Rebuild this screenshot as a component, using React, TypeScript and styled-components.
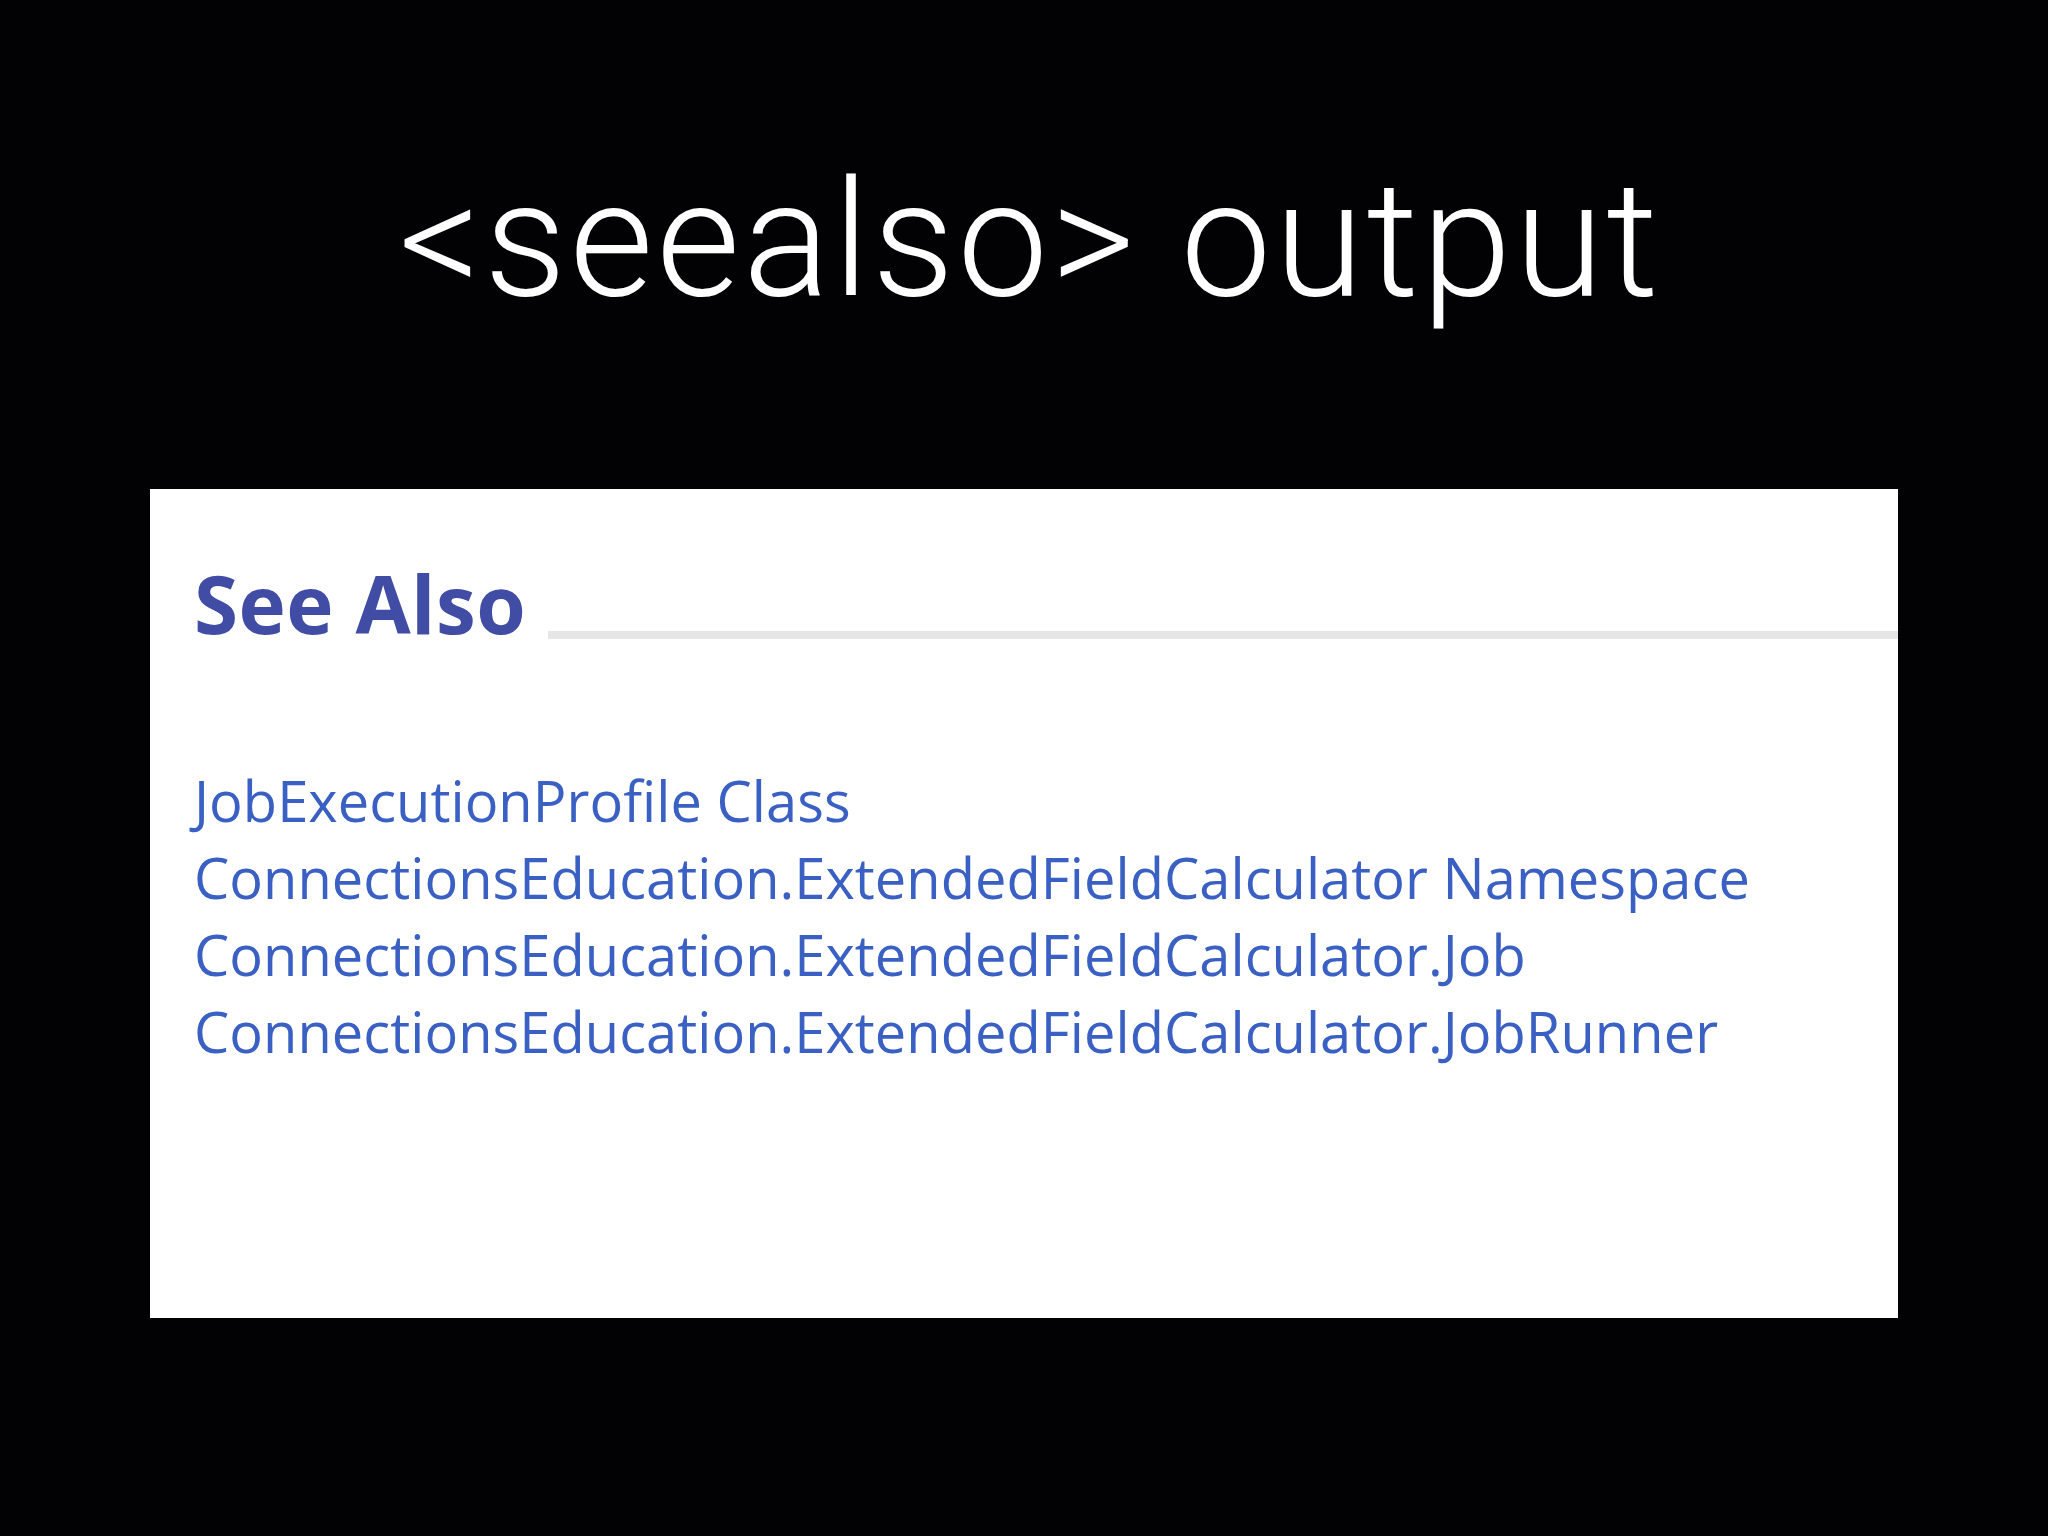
import React from 'react';
import styled, { createGlobalStyle } from 'styled-components';

const GlobalStyle = createGlobalStyle`
  html, body {
    margin: 0;
    padding: 0;
    background: #000;
  }
`;

const Slide = styled.div`
  width: 2048px;
  height: 1536px;
  background: #020204;
  display: flex;
  flex-direction: column;
  align-items: flex-start;
  padding-top: 159px;
  box-sizing: border-box;
  overflow: hidden;
`;

const Title = styled.h1`
  align-self: center;
  margin: 0;
  padding-left: 12px;
  font-family: Roboto, "Liberation Sans", sans-serif;
  font-weight: 300;
  font-size: 162px;
  line-height: 1;
  color: #fff;
  letter-spacing: 3px;
`;

const Panel = styled.div`
  margin: 168px 0 0 150px;
  width: 1748px;
  height: 829px;
  background: #fff;
  box-sizing: border-box;
  padding: 74px 0 0 44px;
  display: flex;
  flex-direction: column;
`;

const HeadingRow = styled.div`
  display: flex;
  align-items: flex-end;
  gap: 22px;
`;

const Heading = styled.h2`
  margin: 0;
  font-family: "Open Sans", "Noto Sans", sans-serif;
  font-weight: 700;
  font-size: 80px;
  line-height: 1;
  color: #414ca4;
  letter-spacing: 0.5px;
  white-space: nowrap;
`;

const Rule = styled.div`
  flex: 1;
  height: 8px;
  margin-bottom: 4px;
  background: #e6e6e6;
`;

const LinkList = styled.ul`
  list-style: none;
  margin: 119px 0 0;
  padding: 0;
`;

const LinkItem = styled.li`
  font-family: "Open Sans", "Noto Sans", sans-serif;
  font-size: 56px;
  line-height: 77px;
  color: #3a60c4;
  letter-spacing: 0.05px;
  white-space: nowrap;
`;

const links = [
  'JobExecutionProfile Class',
  'ConnectionsEducation.ExtendedFieldCalculator Namespace',
  'ConnectionsEducation.ExtendedFieldCalculator.Job',
  'ConnectionsEducation.ExtendedFieldCalculator.JobRunner',
];

export default function App() {
  return (
    <>
      <GlobalStyle />
      <Slide>
        <Title>&lt;seealso&gt; output</Title>
        <Panel>
          <HeadingRow>
            <Heading>See Also</Heading>
            <Rule />
          </HeadingRow>
          <LinkList>
            {links.map((l) => (
              <LinkItem key={l}>{l}</LinkItem>
            ))}
          </LinkList>
        </Panel>
      </Slide>
    </>
  );
}
